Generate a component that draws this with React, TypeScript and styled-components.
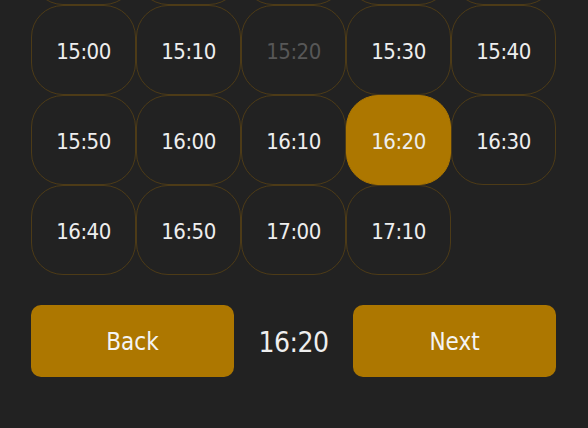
import React from "react";
import styled, { createGlobalStyle } from "styled-components";

const Global = createGlobalStyle`
  html, body { margin: 0; padding: 0; background: #222222; overflow: hidden; }
  body { font-family: "DejaVu Sans Condensed", "DejaVu Sans", sans-serif; font-stretch: condensed; }
`;

const Page = styled.div`
  width: 588px;
  height: 428px;
  box-sizing: border-box;
  padding: 0 32px 0 31px;
  background: #222222;
  overflow: hidden;
`;

const Grid = styled.div`
  display: grid;
  grid-template-columns: repeat(5, 105px);
  grid-auto-rows: 90px;
  margin-top: -85px;
`;

const Slot = styled.button<{ $selected?: boolean; $disabled?: boolean }>`
  box-sizing: border-box;
  margin: 0;
  padding: 2px 0 0;
  border: 1px solid ${(p) => (p.$selected ? "#ad7700" : "#4d3b17")};
  border-radius: 32px;
  background: ${(p) => (p.$selected ? "#ad7700" : "transparent")};
  color: ${(p) => (p.$disabled ? "#575757" : "#eeeeee")};
  font-family: inherit;
  font-stretch: condensed;
  font-size: 22px;
  letter-spacing: -0.5px;
  display: flex;
  align-items: center;
  justify-content: center;
`;

const Footer = styled.div`
  display: grid;
  grid-template-columns: 203px 1fr 203px;
  align-items: center;
  margin-top: 30px;
  height: 72px;
`;

const ActionButton = styled.button`
  height: 72px;
  border: none;
  border-radius: 10px;
  background: #ad7700;
  color: #f4f4f4;
  font-family: inherit;
  font-stretch: condensed;
  font-size: 24px;
  padding: 2px 0 0;
`;

const Chosen = styled.div`
  text-align: center;
  color: #eeeeee;
  font-size: 28px;
  letter-spacing: -0.5px;
  padding-top: 2px;
`;

const hiddenRow = ["14:10", "14:20", "14:30", "14:40", "14:50"];
const rows = [
  ["15:00", "15:10", "15:20", "15:30", "15:40"],
  ["15:50", "16:00", "16:10", "16:20", "16:30"],
  ["16:40", "16:50", "17:00", "17:10"],
];

export default function App() {
  const selected = "16:20";
  const disabled = ["15:20"];
  return (
    <Page>
      <Global />
      <Grid>
        {hiddenRow.map((t) => (
          <Slot key={t} aria-label={t} />
        ))}
        {rows.flat().map((t) => (
          <Slot key={t} $selected={t === selected} $disabled={disabled.includes(t)}>
            {t}
          </Slot>
        ))}
      </Grid>
      <Footer>
        <ActionButton>Back</ActionButton>
        <Chosen>{selected}</Chosen>
        <ActionButton>Next</ActionButton>
      </Footer>
    </Page>
  );
}
